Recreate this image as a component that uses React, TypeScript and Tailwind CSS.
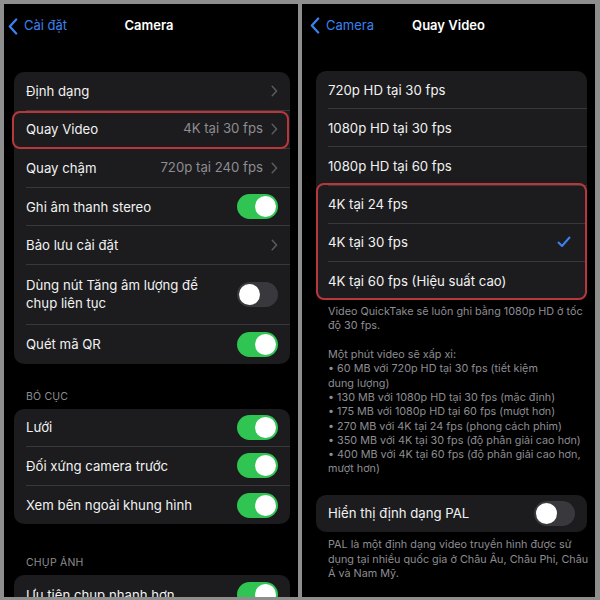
import React from "react";

const font = { fontFamily: "Inter, 'Noto Sans', sans-serif" };

function Chevron() {
  return (
    <svg width="7" height="12" viewBox="0 0 7 12" className="shrink-0">
      <path d="M1.2 1.2 L5.6 6 L1.2 10.8" fill="none" stroke="#5b5b60" strokeWidth="1.5" strokeLinecap="round" strokeLinejoin="round" />
    </svg>
  );
}

function Back() {
  return (
    <svg width="10" height="17" viewBox="0 0 10 17" className="shrink-0">
      <path d="M8.2 1.5 L1.8 8.5 L8.2 15.5" fill="none" stroke="#3b82f0" strokeWidth="2.2" strokeLinecap="round" strokeLinejoin="round" />
    </svg>
  );
}

function Toggle({ on }: { on: boolean }) {
  return (
    <div
      className={`w-[41px] h-[25px] rounded-full flex items-center px-[2px] shrink-0 ${
        on ? "bg-[#30c552] justify-end" : "bg-[#39393d] justify-start"
      }`}
    >
      <div className="w-[21px] h-[21px] rounded-full bg-white" />
    </div>
  );
}

function Row({
  label,
  value,
  chevron,
  toggle,
  last,
  h = "h-[38.6px]",
  check,
}: {
  label: React.ReactNode;
  value?: string;
  chevron?: boolean;
  toggle?: boolean | undefined;
  last?: boolean;
  h?: string;
  check?: boolean;
}) {
  return (
    <div className={`pl-[12px] ${h}`}>
      <div className={`h-full flex items-center pr-[12px] ${last ? "" : "border-b border-[#38383a]"}`}>
        <div className="flex-1 text-[13.2px] leading-[18px] text-[#f2f2f2] whitespace-nowrap">{label}</div>
        {value && <div className="text-[13.2px] text-[#8d8d92] mr-[8px]">{value}</div>}
        {chevron && <Chevron />}
        {toggle !== undefined && <Toggle on={toggle} />}
        {check && (
          <svg width="14" height="12" viewBox="0 0 14 12" className="mr-[4px]">
            <path d="M1.5 6.5 L5 10 L12.5 1.5" fill="none" stroke="#3b82f0" strokeWidth="2" strokeLinecap="round" strokeLinejoin="round" />
          </svg>
        )}
      </div>
    </div>
  );
}

function SectionHeader({ children, mt }: { children: string; mt: string }) {
  return (
    <div className={`${mt} mb-[5px] pl-[12px] text-[10.5px] leading-[14px] text-[#8d8d92] tracking-[0.2px]`}>{children}</div>
  );
}

export default function App() {
  return (
    <div className="w-[600px] h-[600px] bg-[#8e8e8e] flex gap-[4px] pl-[4px] pt-[4px] overflow-hidden" style={font}>
      {/* Left panel */}
      <div className="w-[294px] h-[593px] bg-black overflow-hidden pl-[10px] pr-[8px]">
        <div className="h-[44px] grid grid-cols-[1fr_auto_1fr] items-center -ml-[6px]">
          <div className="flex items-center gap-[6px]">
            <Back />
            <span className="text-[13px] text-[#3b82f0]">Cài đặt</span>
          </div>
          <div className="text-[13px] font-semibold text-white">Camera</div>
          <div />
        </div>
        <div className="mt-[24px] rounded-[10px] bg-[#1c1c1e] relative">
          <Row label="Định dạng" chevron />
          <Row label="Quay Video" value="4K tại 30 fps" chevron />
          <Row label="Quay chậm" value="720p tại 240 fps" chevron />
          <Row label="Ghi âm thanh stereo" toggle={true} />
          <Row label="Bảo lưu cài đặt" chevron />
          <Row label={<>Dùng nút Tăng âm lượng để<br />chụp liên tục</>} toggle={false} h="h-[60px]" />
          <Row label="Quét mã QR" toggle={true} last />
          <div className="absolute left-[-2px] right-[1px] top-[39px] h-[38px] rounded-[8px] border-2 border-[#b9373c]" />
        </div>
        <SectionHeader mt="mt-[26px]">BÓ CỤC</SectionHeader>
        <div className="rounded-[10px] bg-[#1c1c1e]">
          <Row label="Lưới" toggle={true} />
          <Row label="Đối xứng camera trước" toggle={true} />
          <Row label="Xem bên ngoài khung hình" toggle={true} last />
        </div>
        <SectionHeader mt="mt-[32px]">CHỤP ẢNH</SectionHeader>
        <div className="rounded-[10px] bg-[#1c1c1e]">
          <Row label="Ưu tiên chụp nhanh hơn" toggle={true} last />
        </div>
      </div>

      {/* Right panel */}
      <div className="w-[293px] h-[593px] bg-black overflow-hidden pl-[14px] pr-[8px]">
        <div className="h-[43px] grid grid-cols-[1fr_auto_1fr] items-center -ml-[6px]">
          <div className="flex items-center gap-[6px]">
            <Back />
            <span className="text-[13px] text-[#3b82f0]">Camera</span>
          </div>
          <div className="text-[13px] font-semibold text-white">Quay Video</div>
          <div />
        </div>
        <div className="mt-[24px] rounded-[10px] bg-[#1c1c1e] relative">
          <Row label="720p HD tại 30 fps" h="h-[38.2px]" />
          <Row label="1080p HD tại 30 fps" h="h-[38.2px]" />
          <Row label="1080p HD tại 60 fps" h="h-[38.2px]" />
          <Row label="4K tại 24 fps" h="h-[38.2px]" />
          <Row label="4K tại 30 fps" h="h-[38.2px]" check />
          <Row label="4K tại 60 fps (Hiệu suất cao)" h="h-[38.2px]" last />
          <div className="absolute left-0 right-0 top-[112px] bottom-0 rounded-[8px] border-2 border-[#b9373c]" />
        </div>
        <div className="mt-[5px] px-[12px] text-[10.8px] leading-[14.3px] text-[#8d8d92] whitespace-nowrap">
          <p>Video QuickTake sẽ luôn ghi bằng 1080p HD ở tốc<br />độ 30 fps.</p>
          <p className="mt-[14.3px]">Một phút video sẽ xấp xỉ:</p>
          <p>• 60 MB với 720p HD tại 30 fps (tiết kiệm<br />dung lượng)</p>
          <p>• 130 MB với 1080p HD tại 30 fps (mặc định)</p>
          <p>• 175 MB với 1080p HD tại 60 fps (mượt hơn)</p>
          <p>• 270 MB với 4K tại 24 fps (phong cách phim)</p>
          <p>• 350 MB với 4K tại 30 fps (độ phân giải cao hơn)</p>
          <p>• 400 MB với 4K tại 60 fps (độ phân giải cao hơn,<br />mượt hơn)</p>
        </div>
        <div className="mt-[18px] rounded-[10px] bg-[#1c1c1e]">
          <Row label="Hiển thị định dạng PAL" toggle={false} h="h-[37.5px]" last />
        </div>
        <div className="mt-[6px] px-[12px] text-[10.8px] leading-[14.5px] text-[#8d8d92] whitespace-nowrap">
          PAL là một định dạng video truyền hình được sử<br />dụng tại nhiều quốc gia ở Châu Âu, Châu Phi, Châu<br />Á và Nam Mỹ.
        </div>
      </div>
    </div>
  );
}
